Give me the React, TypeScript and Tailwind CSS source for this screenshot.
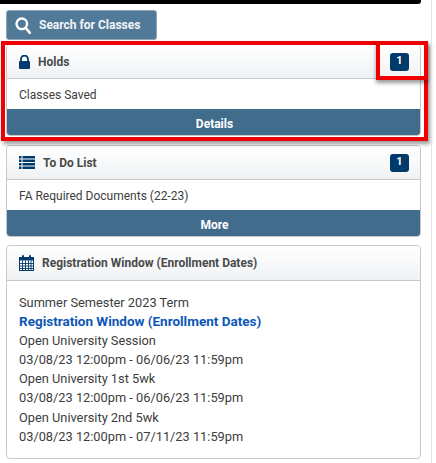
import { ReactNode } from "react";

function LockIcon() {
  return (
    <svg width="11" height="14" viewBox="0 0 11 14" className="shrink-0">
      <path d="M2 6V4a3.5 3.5 0 0 1 7 0V6" fill="none" stroke="#003b6b" strokeWidth="1.8" />
      <rect x="0" y="6" width="11" height="8" rx="1" fill="#003b6b" />
    </svg>
  );
}

function ListIcon() {
  return (
    <svg width="16" height="13" viewBox="0 0 16 13" className="shrink-0" fill="#003b6b">
      <rect x="0" y="0" width="2.5" height="2.5" />
      <rect x="3.5" y="0" width="12.5" height="2.5" />
      <rect x="0" y="3.5" width="2.5" height="2.5" />
      <rect x="3.5" y="3.5" width="12.5" height="2.5" />
      <rect x="0" y="7" width="2.5" height="2.5" />
      <rect x="3.5" y="7" width="12.5" height="2.5" />
      <rect x="0" y="10.5" width="2.5" height="2.5" />
      <rect x="3.5" y="10.5" width="12.5" height="2.5" />
    </svg>
  );
}

function CalendarIcon() {
  return (
    <svg width="15" height="16" viewBox="0 0 15 16" className="shrink-0">
      <rect x="0.5" y="2.5" width="14" height="13" fill="#fff" stroke="#003b6b" />
      <rect x="0.5" y="2.5" width="14" height="3" fill="#003b6b" />
      <rect x="3" y="0" width="2" height="4" rx="1" fill="#003b6b" />
      <rect x="10" y="0" width="2" height="4" rx="1" fill="#003b6b" />
      <path d="M0.5 8.5h14M0.5 11h14M0.5 13.5h14M3.5 5.5v10M6.5 5.5v10M9.5 5.5v10M12 5.5v10" stroke="#003b6b" strokeWidth="0.9" />
    </svg>
  );
}

function SearchIcon() {
  return (
    <svg width="16" height="17" viewBox="0 0 16 17" className="shrink-0">
      <circle cx="6.8" cy="6.8" r="5.3" fill="none" stroke="#fff" strokeWidth="2.4" />
      <path d="M10.8 11l4 4.8" stroke="#fff" strokeWidth="2.6" strokeLinecap="round" />
    </svg>
  );
}

function Badge({ n }: { n: number }) {
  return (
    <span className="flex h-[18px] w-[19px] items-center justify-center rounded-[3px] bg-[#003b6b] text-[11px] font-bold text-white">
      {n}
    </span>
  );
}

function CardHeader({ icon, title, badge, h }: { icon: ReactNode; title: string; badge?: number; h: string }) {
  return (
    <div className={`flex ${h} items-center border-b border-[#c8c8c8] bg-gradient-to-b from-white to-[#eff2f4] pl-3 pr-[11px]`}>
      {icon}
      <span className="ml-2 text-[12px] font-bold text-[#4a4a4a]">{title}</span>
      {badge !== undefined && (
        <span className="ml-auto">
          <Badge n={badge} />
        </span>
      )}
    </div>
  );
}

function SummaryCard({ icon, title, badge, text, action, mt }: { icon: ReactNode; title: string; badge: number; text: string; action: string; mt: string }) {
  return (
    <div className={`${mt} overflow-hidden rounded-[4px] border border-[#c8c8c8] bg-white`}>
      <CardHeader icon={icon} title={title} badge={badge} h="h-[34px]" />
      <div className="flex h-[30px] items-center pl-3 pt-[2px] text-[12px] text-[#3d3d3d]">{text}</div>
      <div className="flex h-[26px] items-center justify-center bg-[#426c8c] pl-[2px] pt-[3px] text-[12px] font-bold text-white">{action}</div>
    </div>
  );
}

export default function App() {
  return (
    <div className="relative h-[463px] w-[436px] overflow-hidden bg-white font-['Roboto',sans-serif]">
      <div className="h-1 w-[421px] rounded-br-[3px] bg-black" />
      <div className="ml-[6px] w-[415px]">
        <button className="mt-[6px] flex h-[30px] w-[151px] items-center gap-2 rounded-[3px] border border-[#8fa5b6] bg-[#517a98] pl-2 text-[12px] font-bold text-[#f2f5f7]">
          <SearchIcon />
          Search for Classes
        </button>

        <SummaryCard mt="mt-[4px]" icon={<LockIcon />} title="Holds" badge={1} text="Classes Saved" action="Details" />
        <SummaryCard mt="mt-[9px]" icon={<ListIcon />} title="To Do List" badge={1} text="FA Required Documents (22-23)" action="More" />

        <div className="mt-[8px] h-[214px] rounded-[4px] border border-[#c8c8c8] bg-white">
          <CardHeader icon={<CalendarIcon />} title="Registration Window (Enrollment Dates)" h="h-[35px] rounded-t-[4px]" />
          <div className="pl-3 pt-[12px] text-[12.8px] leading-[19.1px] text-[#3d3d3d]">
            <p>Summer Semester 2023 Term</p>
            <p className="text-[13.5px] font-bold text-[#0b57b7]">Registration Window (Enrollment Dates)</p>
            <p>Open University Session</p>
            <p>03/08/23 12:00pm - 06/06/23 11:59pm</p>
            <p>Open University 1st 5wk</p>
            <p>03/08/23 12:00pm - 06/06/23 11:59pm</p>
            <p>Open University 2nd 5wk</p>
            <p>03/08/23 12:00pm - 07/11/23 11:59pm</p>
          </div>
        </div>
      </div>

      {/* red annotation boxes drawn over the screenshot */}
      <div className="absolute left-[1px] top-[41px] h-[100px] w-[427px] border-[4px] border-[#f00000] shadow-[2px_3px_4px_rgba(0,0,0,0.4)]" />
      <div className="absolute left-[376px] top-[41px] h-[39px] w-[52px] border-[4px] border-[#f00000] shadow-[0_3px_4px_rgba(0,0,0,0.4)]" />
      <div className="absolute bottom-0 left-[431px] top-0 w-px bg-[#e4e4e4]" />
    </div>
  );
}
